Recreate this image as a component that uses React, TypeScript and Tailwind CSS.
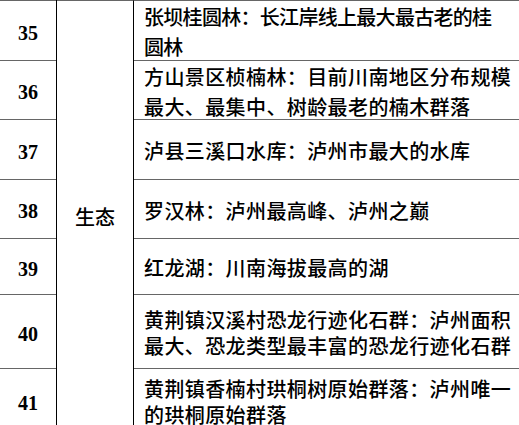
import React from "react";

type Row = {
  no: string;
  lines: string[];
  h: string;
  leading: string;
  tracking?: string;
};

const rows: Row[] = [
  { no: "35", lines: ["张坝桂圆林：长江岸线上最大最古老的桂", "圆林"], h: "h-[60px]", leading: "leading-[30px]", tracking: "tracking-[-0.7px]" },
  { no: "36", lines: ["方山景区桢楠林：目前川南地区分布规模", "最大、最集中、树龄最老的楠木群落"], h: "h-[59px]", leading: "leading-[30px]" },
  { no: "37", lines: ["泸县三溪口水库：泸州市最大的水库"], h: "h-[60px]", leading: "leading-[30px]" },
  { no: "38", lines: ["罗汉林：泸州最高峰、泸州之巅"], h: "h-[59px]", leading: "leading-[30px]" },
  { no: "39", lines: ["红龙湖：川南海拔最高的湖"], h: "h-[56px]", leading: "leading-[30px]" },
  { no: "40", lines: ["黄荆镇汉溪村恐龙行迹化石群：泸州面积", "最大、恐龙类型最丰富的恐龙行迹化石群"], h: "h-[74px]", leading: "leading-[26px]" },
  { no: "41", lines: ["黄荆镇香楠村珙桐树原始群落：泸州唯一", "的珙桐原始群落"], h: "h-[64px]", leading: "leading-[26px]" },
];

const App = () => {
  return (
    <div className="w-[519px] h-[425px] overflow-hidden bg-white">
      <div className="flex">
        {/* number column */}
        <div className="w-[57px] flex flex-col border-r border-black">
          {rows.map((r) => (
            <div
              key={r.no}
              className={`${r.h} border-t border-[#666] flex items-center justify-center pt-[4px] text-[20px] font-bold text-black font-['Liberation_Serif',serif]`}
            >
              {r.no}
            </div>
          ))}
        </div>

        {/* category column */}
        <div className="w-[77px] border-r border-black border-t border-t-[#666] flex items-center justify-center text-[20px] text-black font-medium font-['Noto_Sans_CJK_SC',sans-serif]">
          生态
        </div>

        {/* description column */}
        <div className="flex-1 flex flex-col">
          {rows.map((r) => (
            <div
              key={r.no}
              className={`${r.h} border-t border-[#666] flex flex-col justify-center pl-[10px] pt-[3px] text-[20px] ${r.tracking ?? "tracking-[0.4px]"} ${r.leading} text-black font-medium font-['Noto_Sans_CJK_SC',sans-serif]`}
            >
              {r.lines.map((l, i) => (
                <div key={i} className="whitespace-nowrap">
                  {l}
                </div>
              ))}
            </div>
          ))}
        </div>
      </div>
    </div>
  );
};

export default App;
